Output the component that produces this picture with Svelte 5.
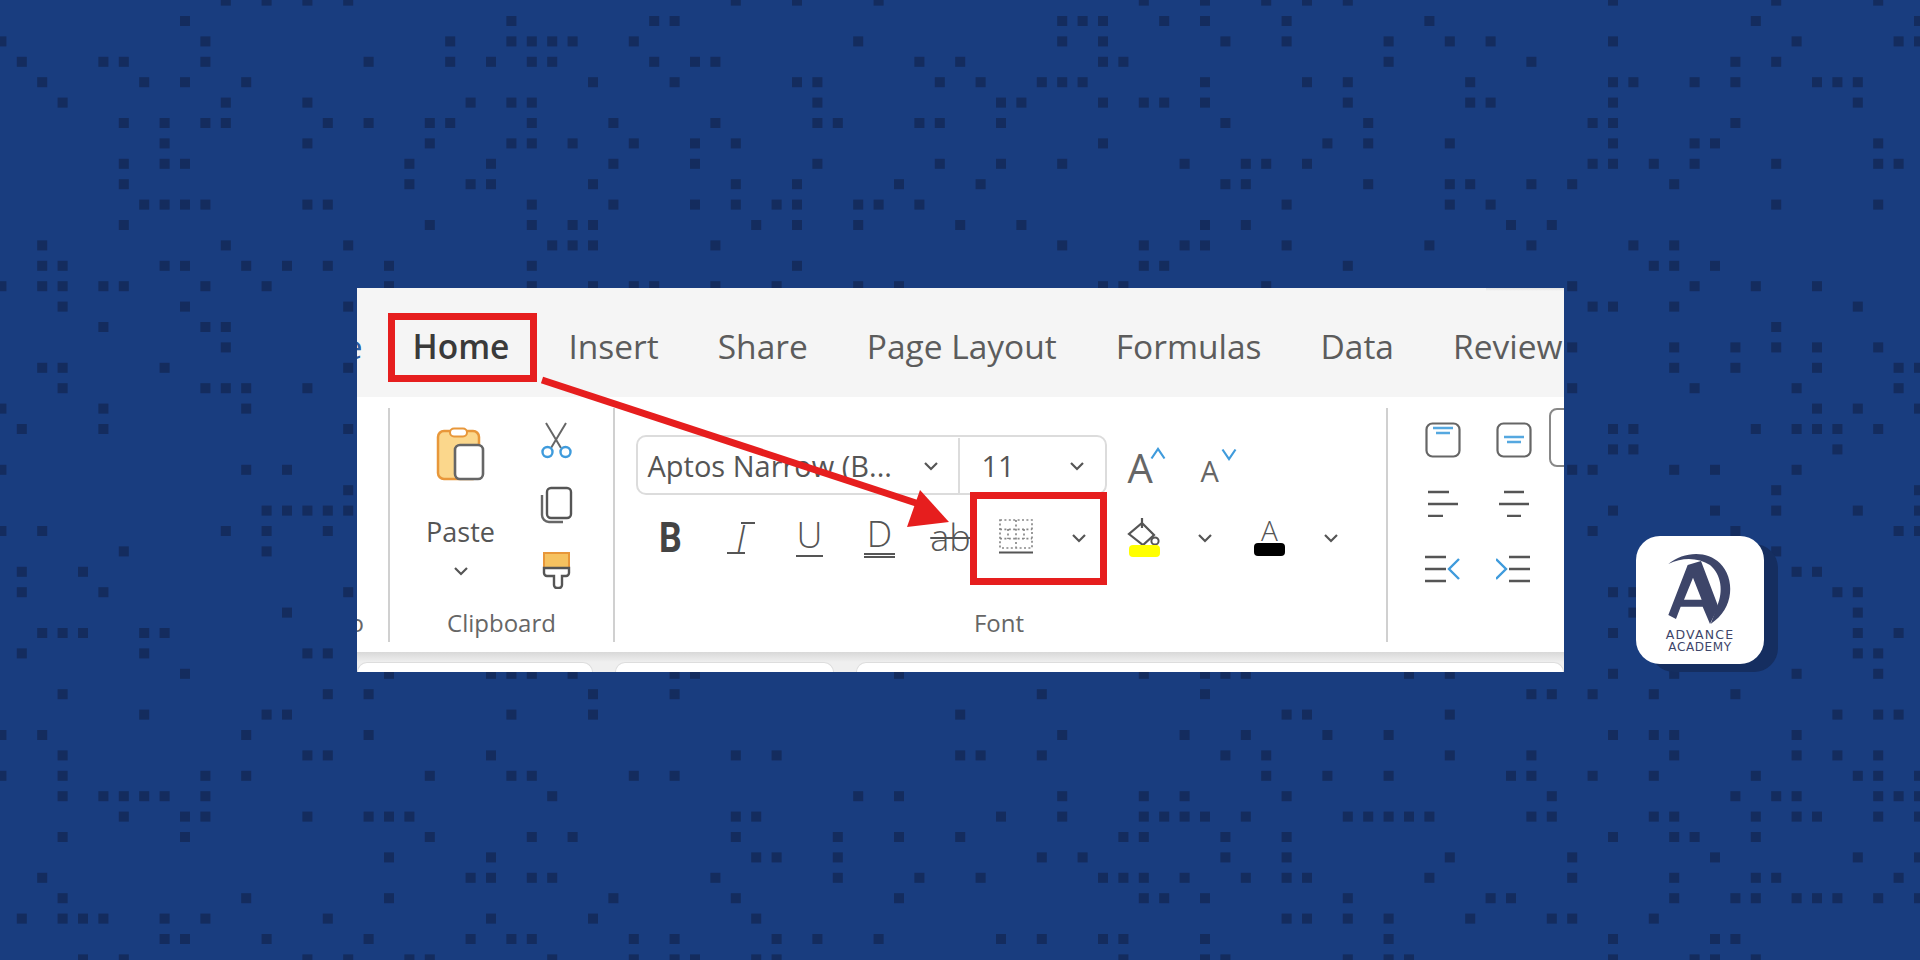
<script>
	// dark squares of the backdrop, listed per row as column numbers (20.4px pitch)
	const rows = [
		[11,13,15,17,36,39,43,56,59,62,64,66,79,87,92],
		[9,25,32,33,52,53,54,57,59,63,70,86,94],
		[0,10,22,25,26,27,28,31,42,52,54,60,63,68,71,73,79,88,93,94],
		[1,5,6,10,18,22,24,26,27,32,34,35,45,47,54,55,68,75,85,87],
		[2,7,9,12,29,33,39,40,46,48,51,52,53,59,64,66,72,79,80,83,85,89,90,91],
		[3,11,15,23,25,26,40,49,50,54,56,57,59,66,72,73,79,91],
		[6,8,10,11,16,18,21,22,26,30,35,40,41,45,46,49,60,67,78,79,85],
		[8,15,21,25,26,28,31,34,36,54,65,67,71,79,83,84,92],
		[6,8,9,20,24,30,34,40,46,49,52,58,61,62,64,78,79,81,83,87,92,93],
		[6,20,23,24,29,36,39,44,48,60,61,67,71,72,75,77,82],
		[7,8,9,10,15,16,26,30,34,36,38,39,42,43,45,63,71,73,87,92],
		[6,21,26,28,29,37,39,42,47,50,59,61,74,76],
		[2,11,17,27,28,29,35,52,56,58,59,63,70,75,80,82],
		[2,3,8,9,12,14,16,19,26,39,56,57,66,81,82,84],
		[0,2,3,5,6,10,13,19,26,29,31,32,35,38,42,44,54,55,62,77,83,86,89],
		[3,9,17,78,79,82,91],
		[5,10,11,87],
		[11,77,82,85,87,89,92],
		[2,3,8,17,82,85,89,93,94],
		[3,10,11,12,15,77,83,88,93],
		[0,5,12,89,91,94],
		[1,5,17,79,80,86,88,89,90,92],
		[79,80,90],
		[0,12,14,77,78,82,84,88],
		[17,87,94],
		[13,14,15,16,17,79,84,87,91,94],
		[0,2,11,13,16,78,85,93,94],
		[6,13,87],
		[1,4,88,89],
		[1,5,17,79,80,90,91],
		[14,80,91],
		[2,3,4,7,8,79,91,93],
		[1,7,15,16,91,92],
		[9,19,24,25,26,28,33,34,44,56,59,60,61,69,71,79,82,88,92],
		[3,16,18,29,33,51,59,75,76,78,81,85],
		[7,13,14,25,29,47,63,64,71,90,92,93],
		[0,2,12,18,52,58,61,65,68,79,81,82,88],
		[3,15,16,24,36,38,47,48,51,60,62,71,75,82,88,90,92],
		[0,3,10,12,21,25,26,31,33,62,65,68,74,75,78,81,86,91,92,94],
		[3,5,6,7,8,10,27,42,44,52,56,58,63,76,85,87,88,92,93,94],
		[6,9,10,15,18,19,20,36,37,49,52,56,57,58,59,61,66,67,68,69,70,75,76,81,82,86,88,89,92,94],
		[3,9,21,26,28,36,41,44,47,55,56,60,63,79,82,83,86],
		[19,24,37,38,41,51,53,60,63,71,77,84,91,94],
		[2,23,24,26,27,35,41,45,48,54,55,56,58,61,63,64,70,77,82,86,87,93],
		[3,12,19,30,36,44,56,57,59,66,73,74,82,85,86,88,89,90,92,94],
		[1,3,4,5,8,10,16,24,29,37,63,64,66,68,72,76,77,81],
		[8,9,13,18,23,25,26,31,33,38,40,43,49,51,54,55,59,68,79,84,85],
		[4,6,15,17,20,21,27,31,33,34,37,38,55,59,60,66,68,69,79,83,84,86]
	];
	const squares = rows.flatMap((cols, r) => cols.map((c) => ({ x: c * 20.4 - 3.6, y: r * 20.4 - 4.4 })));
	const tabs = ['Insert', 'Share', 'Page Layout', 'Formulas', 'Data', 'Review'];
</script>

{#snippet chevron()}
	<svg class="chev" width="16" height="10" viewBox="0 0 16 10"><path d="M2 2l6 6 6-6" fill="none" stroke="#555" stroke-width="2.2" /></svg>
{/snippet}

<div class="page">
	<svg class="dots" width="1920" height="960" aria-hidden="true">
		{#each squares as s}
			<rect x={s.x} y={s.y} width="10" height="10" fill="#142c5e" />
		{/each}
	</svg>

	<main class="panel">
		<nav class="tabs">
			<span class="tab file">File</span>
			<span class="tab home">Home</span>
			{#each tabs as t}
				<span class="tab">{t}</span>
			{/each}
		</nav>

		<section class="ribbon">
			<div class="group undo">
				<div class="content"></div>
				<div class="label">Undo</div>
			</div>

			<div class="group clipboard">
				<div class="content clip-row">
					<div class="paste">
						<svg width="50" height="54" viewBox="0 0 50 54">
							<rect x="2" y="4" width="41" height="48" rx="6" fill="#fbd78c" stroke="#e8973a" stroke-width="2.5" />
							<rect x="14" y="1.5" width="17" height="8" rx="4" fill="#fff" stroke="#e8973a" stroke-width="2" />
							<rect x="19" y="18" width="28" height="34" rx="5" fill="#fff" stroke="#666" stroke-width="2.6" />
						</svg>
						<span class="paste-text">Paste</span>
						{@render chevron()}
					</div>
					<div class="tools">
						<svg width="36" height="38" viewBox="0 0 36 38">
							<path d="M8 2l15 25M28 2L13 27" fill="none" stroke="#666" stroke-width="2" />
							<circle cx="9.5" cy="31" r="5" fill="#fff" stroke="#3f9bdc" stroke-width="2.4" />
							<circle cx="27.5" cy="31" r="5" fill="#fff" stroke="#3f9bdc" stroke-width="2.4" />
						</svg>
						<svg width="36" height="38" viewBox="0 0 36 38">
							<rect x="9" y="2" width="24" height="30" rx="4" fill="#fff" stroke="#555" stroke-width="2.4" />
							<path d="M4 9v20a7 7 0 0 0 7 7h14" fill="none" stroke="#666" stroke-width="2.4" />
						</svg>
						<svg width="36" height="38" viewBox="0 0 36 38">
							<path d="M6 2h25v15H6z" fill="#f6c260" stroke="#e8973a" stroke-width="2" />
							<path d="M6 17h25v5a3 3 0 0 1-3 3h-4v9a3 3 0 0 1-3 3h-2a3 3 0 0 1-3-3v-9H9a3 3 0 0 1-3-3z" fill="#fff" stroke="#555" stroke-width="2.4" />
						</svg>
					</div>
				</div>
				<div class="label">Clipboard</div>
			</div>

			<div class="group font">
				<div class="content">
					<div class="font-row">
						<div class="font-box">
							<div class="font-name">
								<span>Aptos Narrow (B...</span>
								{@render chevron()}
							</div>
							<div class="font-size">
								<span>11</span>
								{@render chevron()}
							</div>
						</div>
						<div class="grow">
							<span class="big-a">A</span>
							<svg width="16" height="13" viewBox="0 0 16 13"><path d="M1.5 11.5L8 2l6.5 9.5" fill="none" stroke="#3f9bdc" stroke-width="2.2" /></svg>
						</div>
						<div class="shrink">
							<span class="small-a">A</span>
							<svg width="16" height="13" viewBox="0 0 16 13"><path d="M1.5 1.5L8 11l6.5-9.5" fill="none" stroke="#3f9bdc" stroke-width="2.2" /></svg>
						</div>
					</div>
					<div class="format-row">
						<span class="cell"><b class="bold">B</b></span>
						<span class="cell"><i class="italic">I</i></span>
						<span class="cell"><span class="under">U</span></span>
						<span class="cell"><span class="double">D</span></span>
						<span class="cell"><span class="strike">ab</span></span>
						<span class="cell">
							<svg class="borders" width="36" height="36" viewBox="0 0 36 36">
								<path d="M2 1h32v28H2zM2 10.3h32M2 19.6h32M18 1v28M10 10v10M26 10v10" fill="none" stroke="#888" stroke-width="1.7" stroke-dasharray="2 2.4" />
								<path d="M1 33.5h34" stroke="#555" stroke-width="2" />
							</svg>
						</span>
						<span class="cell">{@render chevron()}</span>
						<span class="cell">
							<svg width="34" height="40" viewBox="0 0 34 40">
								<path d="M15 0v10M15 5l12 12-11 10L2 16z" fill="#fff" stroke="#555" stroke-width="2.2" />
								<circle cx="28" cy="23" r="3.6" fill="#fff" stroke="#555" stroke-width="2" />
								<rect x="2" y="27" width="31" height="12" rx="4" fill="#ffff00" />
							</svg>
						</span>
						<span class="cell">{@render chevron()}</span>
						<span class="cell color">
							<span class="color-a">A</span>
							<span class="black-bar"></span>
						</span>
						<span class="cell">{@render chevron()}</span>
					</div>
				</div>
				<div class="label">Font</div>
			</div>

			<div class="group align">
				<div class="align-grid">
					<svg width="36" height="36" viewBox="0 0 36 36">
						<rect x="1.5" y="1.5" width="33" height="33" rx="6" fill="#fff" stroke="#666" stroke-width="2.2" />
						<path d="M8 6h20M11 11h14" stroke="#55a8e0" stroke-width="2.4" />
					</svg>
					<svg width="36" height="36" viewBox="0 0 36 36">
						<rect x="1.5" y="1.5" width="33" height="33" rx="6" fill="#fff" stroke="#666" stroke-width="2.2" />
						<path d="M8 15h20M11 20h14" stroke="#55a8e0" stroke-width="2.4" />
					</svg>
					<div class="wrap-box"></div>
					<svg width="36" height="27" viewBox="0 0 36 27">
						<path d="M3 2h21M3 14h30M3 26h15" stroke="#555" stroke-width="2.4" />
					</svg>
					<svg width="36" height="27" viewBox="0 0 36 27">
						<path d="M8 2h20M3 14h30M11 26h14" stroke="#555" stroke-width="2.4" />
					</svg>
					<span></span>
					<svg width="38" height="28" viewBox="0 0 38 28">
						<path d="M0 2h21M0 14h21M0 26h21" stroke="#555" stroke-width="2.4" />
						<path d="M34 4L24 14l10 10" fill="none" stroke="#3f9bdc" stroke-width="2.4" />
					</svg>
					<svg width="38" height="28" viewBox="0 0 38 28">
						<path d="M13 2h21M13 14h21M13 26h21" stroke="#555" stroke-width="2.4" />
						<path d="M0 4l10 10L0 24" fill="none" stroke="#3f9bdc" stroke-width="2.4" />
					</svg>
				</div>
			</div>
		</section>

		<div class="formula-bar">
			<div class="field name"></div>
			<div class="field func"></div>
			<div class="field input"></div>
		</div>

		<div class="mark home-mark"></div>
		<div class="mark borders-mark"></div>
		<svg class="arrow" width="1207" height="384" viewBox="0 0 1207 384">
			<path d="M185 92L562 216" stroke="#e61e1e" stroke-width="7" />
			<path d="M563 202L592 234L550 239z" fill="#e61e1e" />
		</svg>
	</main>

	<div class="badge">
		<svg width="74" height="80" viewBox="130 85 220 240">
			<path d="M145 127C190 90 260 85 300 125C345 170 345 260 272 307L292 252C310 210 305 160 270 130C235 108 190 105 145 127Z" fill="#3d4569" />
			<path fill-rule="evenodd" d="M203 130L243 118L295 255L270 307L248 255L182 255L168 292L145 280ZM219 168L192 234H245Z" fill="#3d4569" />
		</svg>
		<span class="adv">ADVANCE</span>
		<span class="aca">ACADEMY</span>
	</div>
</div>

<style>
	:global(body) {
		margin: 0;
		background: #193d7f;
	}
	.page {
		position: relative;
		width: 1920px;
		height: 960px;
		overflow: hidden;
		display: flex;
		align-items: center;
		justify-content: center;
		background: #193d7f;
		font-family: "Open Sans", "Liberation Sans", sans-serif;
		color: #555;
	}
	.dots {
		position: absolute;
		left: 0;
		top: 0;
	}

	.panel {
		position: relative;
		width: 1207px;
		height: 384px;
		overflow: hidden;
		background: #fff;
		display: flex;
		flex-direction: column;
	}

	.tabs {
		position: relative;
		height: 109px;
		flex: none;
		box-sizing: border-box;
		padding-top: 7px;
		display: flex;
		align-items: center;
		gap: 59px;
		background: #f5f5f5;
		white-space: nowrap;
		font-size: 33.5px;
		color: #5c5c5c;
	}
	.tabs::before {
		content: "";
		position: absolute;
		right: 0;
		top: 0;
		width: 78px;
		height: 3px;
		background: linear-gradient(#e2e2e2, #f5f5f5);
	}
	.file {
		margin-left: -47px;
		margin-right: -9px;
		color: #2b5c9e;
	}
	.home {
		font-weight: 600;
		color: #3a3a3a;
	}

	.ribbon {
		height: 255px;
		flex: none;
		box-sizing: border-box;
		padding: 11px 0 10px;
		display: flex;
	}
	.group {
		flex: none;
		display: flex;
		flex-direction: column;
		box-sizing: content-box;
		border-right: 2px solid #d0d0d0;
		overflow: hidden;
	}
	.content {
		height: 196px;
		flex: none;
	}
	.label {
		height: 38px;
		line-height: 38px;
		text-align: center;
		font-size: 24px;
		color: #666;
	}
	.undo {
		width: 31px;
	}
	.undo .label {
		width: 60px;
		margin-left: -54px;
		text-align: right;
	}
	.clipboard {
		width: 223px;
	}
	.clipboard .label {
		padding-left: 5px;
		padding-right: 22px;
		margin-left: 18px;
	}
	.clip-row {
		display: flex;
	}
	.paste {
		width: 142px;
		flex: none;
		padding-top: 19px;
		box-sizing: border-box;
		display: flex;
		flex-direction: column;
		align-items: center;
	}
	.paste-text {
		margin-top: 32px;
		height: 38px;
		line-height: 38px;
		font-size: 27px;
	}
	.paste .chev {
		margin-top: 15px;
	}
	.tools {
		width: 48px;
		padding-top: 13px;
		display: flex;
		flex-direction: column;
		align-items: center;
		gap: 27px;
	}

	.font {
		width: 771px;
		padding-left: 0;
	}
	.font .label {
		padding-right: 2px;
	}
	.font-row {
		margin: 27px 0 0 21px;
		display: flex;
		align-items: stretch;
	}
	.font-box {
		width: 471px;
		height: 60px;
		box-sizing: border-box;
		padding-top: 1px;
		border: 2px solid #dcdcdc;
		border-radius: 10px;
		display: flex;
		font-size: 29px;
		color: #555;
	}
	.font-name {
		width: 322px;
		box-sizing: border-box;
		padding: 0 19px 0 10px;
		border-right: 2px solid #dcdcdc;
		display: flex;
		align-items: center;
		justify-content: space-between;
		white-space: nowrap;
	}
	.font-size {
		flex: 1;
		padding: 0 20px 0 22px;
		display: flex;
		align-items: center;
		justify-content: space-between;
	}
	.grow, .shrink {
		position: relative;
		height: 60px;
		display: flex;
		align-items: flex-start;
	}
	.grow {
		margin-left: 21px;
		width: 72px;
	}
	.big-a {
		font-size: 40px;
		line-height: 60px;
		height: 60px;
		margin-top: 3px;
		color: #666;
	}
	.grow svg {
		margin: 12px 0 0 -3px;
	}
	.small-a {
		font-size: 29px;
		line-height: 60px;
		height: 60px;
		margin-top: 6px;
		color: #666;
	}
	.shrink svg {
		margin: 13px 0 0 2px;
	}
	.shrink {
		margin-left: 1px;
	}

	.format-row {
		margin: 22px 0 0 21px;
		height: 40px;
		display: grid;
		grid-template-columns: 70px 70px 68px 72px 70px 60px 66px 64px 58px 72px 50px;
	}
	.cell {
		display: flex;
		align-items: center;
		justify-content: center;
		line-height: 1;
	}
	.bold {
		font-family: Roboto, "Liberation Sans", sans-serif;
		font-size: 42px;
		transform: scaleX(0.85);
		color: #444;
	}
	.italic {
		position: relative;
		width: 28px;
		height: 32px;
		line-height: 32px;
		text-align: center;
		font-size: 38px;
		font-weight: 300;
		color: #555;
	}
	.italic::before, .italic::after {
		content: "";
		position: absolute;
		height: 2px;
		background: #555;
	}
	.italic::before {
		top: 0;
		right: 0;
		width: 14px;
	}
	.italic::after {
		bottom: 0;
		left: 0;
		width: 18px;
	}
	.under, .double {
		font-size: 36px;
		font-weight: 300;
		height: 36px;
		line-height: 32px;
		padding: 0 1px;
		border-bottom: 2px solid #555;
	}
	.double {
		border-bottom: 5px double #555;
		height: 35px;
		padding: 0 3px;
	}
	.strike {
		position: relative;
		font-size: 36px;
		font-weight: 300;
		text-decoration: line-through;
		text-decoration-thickness: 2px;
	}
	.borders {
		margin-top: -2px;
	}
	.color {
		flex-direction: column;
		justify-content: flex-start;
	}
	.color-a {
		font-size: 28px;
		height: 26px;
		line-height: 26px;
		font-weight: 300;
	}
	.black-bar {
		width: 31px;
		height: 13px;
		border-radius: 4px;
		background: #000;
	}

	.align {
		border-right: 0;
		flex: 1;
		overflow: visible;
	}
	.align-grid {
		margin: 14px 0 0 37px;
		display: grid;
		grid-template-columns: 36px 36px 60px;
		grid-template-rows: 36px 27px 28px;
		column-gap: 35px;
		row-gap: 32px;
	}
	.wrap-box {
		width: 60px;
		height: 59px;
		margin-top: -14px;
		margin-left: -18px;
		box-sizing: border-box;
		border: 2px solid #888;
		border-radius: 8px;
	}
	.align-grid svg:nth-of-type(n + 5) {
		margin-top: 6px;
	}

	.formula-bar {
		flex: 1;
		box-sizing: border-box;
		padding-top: 10px;
		background: linear-gradient(#d8d8d8, #efefef 10px);
		display: flex;
		gap: 22px;
	}
	.field {
		box-sizing: border-box;
		background: #fff;
		border: 1px solid #ddd;
		border-bottom: 0;
		border-radius: 10px 10px 0 0;
	}
	.name {
		width: 236px;
	}
	.func {
		width: 219px;
	}
	.input {
		flex: 1;
	}

	.mark {
		position: absolute;
		box-sizing: border-box;
		border: 7px solid #e61e1e;
	}
	.home-mark {
		left: 31px;
		top: 25px;
		width: 149px;
		height: 69px;
	}
	.borders-mark {
		left: 613px;
		top: 204px;
		width: 137px;
		height: 93px;
	}
	.arrow {
		position: absolute;
		left: 0;
		top: 0;
	}

	.badge {
		position: absolute;
		left: 1636px;
		top: 536px;
		width: 128px;
		height: 128px;
		box-sizing: border-box;
		padding-top: 14px;
		border-radius: 24px;
		background: #fff;
		box-shadow: 14px 8px 0 #152e60;
		display: flex;
		flex-direction: column;
		align-items: center;
		font-family: "DejaVu Sans", sans-serif;
		color: #3d4569;
	}
	.badge svg {
		flex: none;
	}
	.adv {
		margin-top: -1.5px;
		font-size: 12.5px;
		line-height: 12px;
		letter-spacing: 1.2px;
	}
	.aca {
		font-size: 12px;
		line-height: 12px;
		letter-spacing: 0.6px;
	}
</style>
